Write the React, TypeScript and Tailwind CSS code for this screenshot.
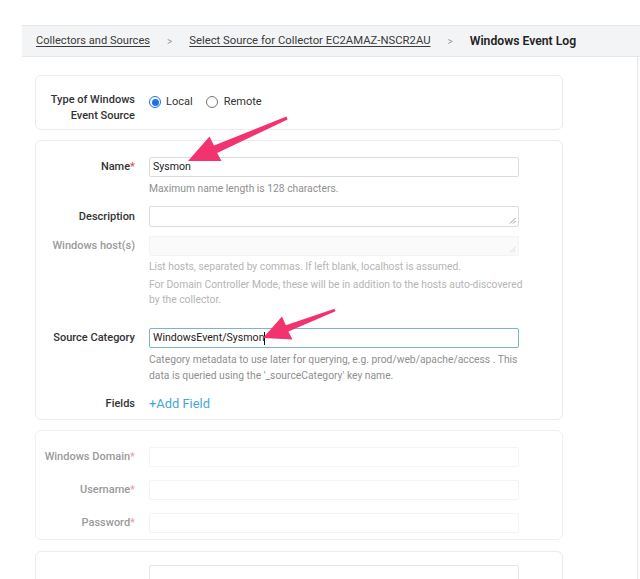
import React from "react";

const font = { fontFamily: "Roboto, 'Liberation Sans', sans-serif" };

function Handle({ faint }: { faint?: boolean }) {
  return (
    <svg className="absolute right-[2px] bottom-[2px]" width="7" height="7" viewBox="0 0 7 7">
      <line x1="6.5" y1="1" x2="1" y2="6.5" stroke={faint ? "#d8d8d8" : "#8a8a8a"} strokeWidth="0.9" />
      <line x1="6.5" y1="4" x2="4" y2="6.5" stroke={faint ? "#d8d8d8" : "#8a8a8a"} strokeWidth="0.9" />
    </svg>
  );
}

function Label({ children, disabled, required }: { children: React.ReactNode; disabled?: boolean; required?: boolean }) {
  return (
    <div
      className={`w-[99px] shrink-0 text-right text-[11px] leading-[16px] font-medium ${
        disabled ? "text-[#9a9a9a]" : "text-[#333333]"
      }`}
    >
      {children}
      {required && <span className={disabled ? "text-[#eaa5a5]" : "text-[#d9534f]"}>*</span>}
    </div>
  );
}

export default function App() {
  return (
    <div className="w-[640px] h-[579px] bg-white overflow-hidden" style={font}>
      <div className="pt-[25px]">
        <div className="ml-[22px] h-[32px] bg-[#f3f4f6] border-y border-[#e6e7ea] flex items-center pl-[14px] text-[11.1px] text-[#3a3a3a]">
          <span className="underline underline-offset-2">Collectors and Sources</span>
          <span className="mx-[17px] text-[#9a9a9a] text-[10px]">&gt;</span>
          <span className="text-[11.3px] underline underline-offset-2">Select Source for Collector EC2AMAZ-NSCR2AU</span>
          <span className="mx-[17px] text-[#9a9a9a] text-[10px]">&gt;</span>
          <span className="text-[12.2px] font-semibold text-[#222222]">Windows Event Log</span>
        </div>
        <div className="flex h-[522px]">
          <div className="ml-[35px] pt-[18px] w-[528px] flex flex-col">
            {/* Card 1 */}
            <div className="border border-[#ececec] rounded-[6px] pt-[16px] pb-[5px] flex items-start">
              <Label>
                Type of Windows
                <br />
                Event Source
              </Label>
              <div className="ml-[14px] mt-[2px] h-[16px] flex items-center text-[11px] text-[#333333]">
                <span className="w-[12px] h-[12px] rounded-full border border-[#1a73e8] flex items-center justify-center">
                  <span className="w-[7px] h-[7px] rounded-full bg-[#1a73e8]" />
                </span>
                <span className="ml-[5px]">Local</span>
                <span className="ml-[13px] w-[12px] h-[12px] rounded-full border border-[#777777]" />
                <span className="ml-[6px]">Remote</span>
              </div>
            </div>

            {/* Card 2 */}
            <div className="mt-[10px] border border-[#ececec] rounded-[6px] pt-[16px] pb-[7px] flex flex-col">
              <div className="flex items-center">
                <Label required>Name</Label>
                <div className="ml-[14px] w-[370px] h-[20px] border border-[#dcdcdc] rounded-[2px] flex items-center pl-[3px] text-[10.6px] text-[#222222]">
                  Sysmon
                </div>
              </div>
              <div className="ml-[113px] mt-[4px] text-[10.3px] leading-[15px] text-[#8f8f8f]">
                Maximum name length is 128 characters.
              </div>

              <div className="mt-[10px] flex items-center">
                <Label>Description</Label>
                <div className="relative ml-[14px] w-[370px] h-[21px] border border-[#dcdcdc] rounded-[2px]">
                  <Handle />
                </div>
              </div>

              <div className="mt-[9px] flex items-start">
                <div className="pt-[2px]">
                  <Label disabled>Windows host(s)</Label>
                </div>
                <div className="relative ml-[14px] w-[370px] h-[20px] border border-[#f3f3f3] bg-[#fafafa] rounded-[2px]">
                  <Handle faint />
                </div>
              </div>
              <div className="ml-[113px] mt-[3px] text-[10.3px] leading-[15px] text-[#b5b5b5] whitespace-nowrap">
                List hosts, separated by commas. If left blank, localhost is assumed.
              </div>
              <div className="ml-[113px] mt-[3px] text-[10.3px] leading-[15px] text-[#b5b5b5] whitespace-nowrap">
                For Domain Controller Mode, these will be in addition to the hosts auto-discovered
                <br />
                by the collector.
              </div>

              <div className="mt-[21px] flex items-center">
                <Label>Source Category</Label>
                <div className="ml-[14px] w-[370px] h-[20px] border border-[#7fb3c6] rounded-[2px] flex items-center pl-[3px] text-[10.6px] text-[#222222]">
                  WindowsEvent/Sysmon
                  <span className="w-[1px] h-[13px] bg-[#111111]" />
                </div>
              </div>
              <div className="ml-[113px] mt-[4px] text-[10.3px] leading-[16px] text-[#8f8f8f] whitespace-nowrap">
                Category metadata to use later for querying, e.g. prod/web/apache/access . This
                <br />
                data is queried using the '_sourceCategory' key name.
              </div>

              <div className="mt-[12px] flex items-center">
                <Label>Fields</Label>
                <span className="ml-[14px] text-[12.9px] leading-[16px] text-[#45a6d6]">+Add Field</span>
              </div>
            </div>

            {/* Card 3 */}
            <div className="mt-[10px] border border-[#f0f0f0] rounded-[6px] pt-[16px] pb-[6px] flex flex-col gap-[13px]">
              {["Windows Domain", "Username", "Password"].map((l) => (
                <div key={l} className="flex items-center">
                  <Label disabled required>
                    {l}
                  </Label>
                  <div className="ml-[14px] w-[370px] h-[20px] border border-[#f4f4f4] rounded-[2px]" />
                </div>
              ))}
            </div>

            {/* Card 4 */}
            <div className="mt-[11px] border border-[#ececec] rounded-[6px] pt-[13px] h-[60px] flex">
              <div className="ml-[113px] w-[370px] h-[20px] border border-[#e6e6e6] rounded-[2px]" />
            </div>
          </div>
          <div className="flex-1" />
          <div className="w-[3px] border-l border-[#e8e8e8] bg-[#fcfcfc]" />
        </div>
      </div>

      <svg className="absolute left-0 top-0 pointer-events-none" width="640" height="579">
        <polygon
          points="188,161 221.5,161 217.2,152.9 287.6,119.4 286.4,116.6 214.0,145.5 209.5,136.5"
          fill="#f2336f"
        />
        <polygon
          points="263,338 292.5,339.5 288.4,331.6 335.5,311.2 334.5,308.8 285.8,325.2 282.0,316.5"
          fill="#f2336f"
        />
      </svg>
    </div>
  );
}
